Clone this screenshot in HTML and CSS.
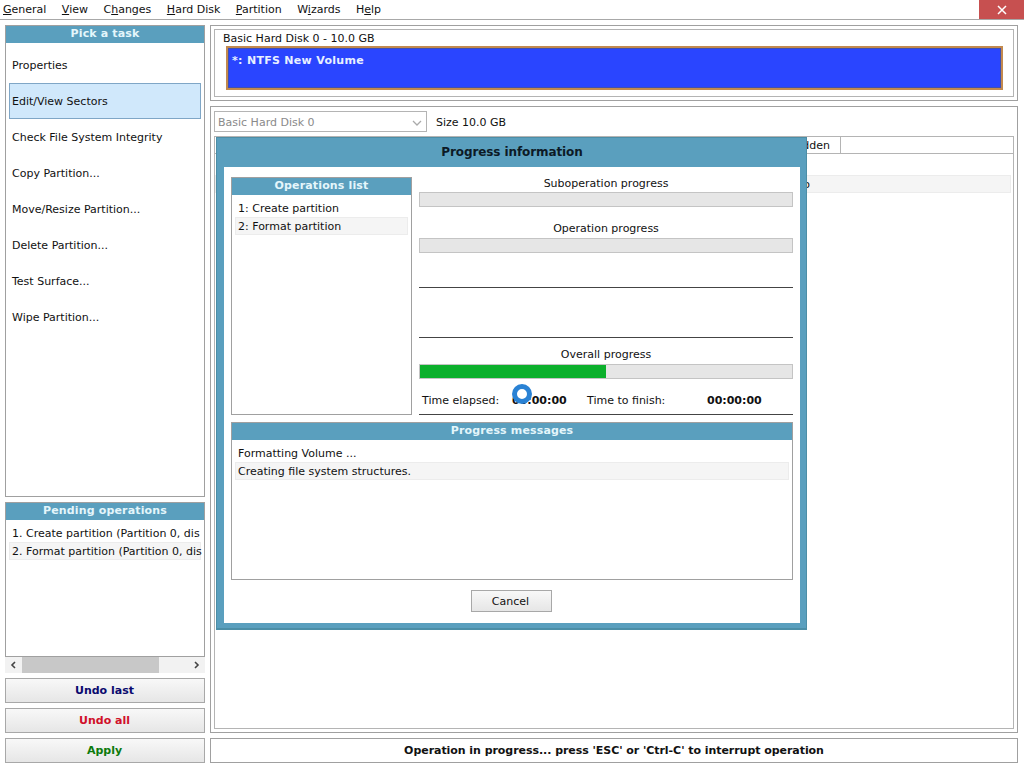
FILE: index.html
```html
<!DOCTYPE html>
<html lang="en">
<head>
<meta charset="utf-8">
<title>Partition manager</title>
<link rel="stylesheet" href="styles.css">
</head>
<body>
<div class="app">
  <header class="menubar">
    <nav class="menus">
      <span class="menu"><u>G</u>eneral</span>
      <span class="menu"><u>V</u>iew</span>
      <span class="menu">C<u>h</u>anges</span>
      <span class="menu"><u>H</u>ard Disk</span>
      <span class="menu"><u>P</u>artition</span>
      <span class="menu">W<u>i</u>zards</span>
      <span class="menu">H<u>e</u>lp</span>
    </nav>
    <div class="close"><svg width="12" height="12" viewBox="0 0 12 12"><path d="M2 2 10 10M10 2 2 10" stroke="#fff" stroke-width="1.5" fill="none"/></svg></div>
  </header>
  <div class="main">
    <aside class="side">
      <section class="panel tasks">
        <h2 class="head">Pick a task</h2>
        <ul class="tasklist">
          <li>Properties</li>
          <li class="sel">Edit/View Sectors</li>
          <li>Check File System Integrity</li>
          <li>Copy Partition...</li>
          <li>Move/Resize Partition...</li>
          <li>Delete Partition...</li>
          <li>Test Surface...</li>
          <li>Wipe Partition...</li>
        </ul>
      </section>
      <section class="panel pending">
        <h2 class="head">Pending operations</h2>
        <ul class="oplist">
          <li>1. Create partition (Partition 0, dis</li>
          <li class="alt">2. Format partition (Partition 0, dis</li>
        </ul>
      </section>
      <div class="hscroll">
        <svg width="16" height="16" viewBox="0 0 16 16"><path d="M10 5 7 8l3 3" stroke="#444" stroke-width="1.6" fill="none"/></svg>
        <div class="track"><div class="thumb"></div></div>
        <svg width="16" height="16" viewBox="0 0 16 16"><path d="M6 5l3 3-3 3" stroke="#444" stroke-width="1.6" fill="none"/></svg>
      </div>
      <button class="action undo">Undo last</button>
      <button class="action undoall">Undo all</button>
      <button class="action apply">Apply</button>
    </aside>
    <div class="content">
      <section class="diskmap">
        <div class="diskmap-in">
          <div class="disklabel">Basic Hard Disk 0 - 10.0 GB</div>
          <div class="volume">*: NTFS New Volume</div>
        </div>
      </section>
      <section class="details">
        <div class="selector">
          <div class="combo"><span>Basic Hard Disk 0</span><svg width="10" height="6" viewBox="0 0 10 6"><path d="M1 1l4 4 4-4" stroke="#aaa" stroke-width="1.3" fill="none"/></svg></div>
          <span class="size">Size 10.0 GB</span>
        </div>
        <div class="table">
          <div class="thead"><div class="hidden-col">Hidden</div></div>
          <div class="trow"><span class="cell-no">No</span></div>
        </div>
      </section>
      <div class="status">Operation in progress... press 'ESC' or 'Ctrl-C' to interrupt operation</div>
    </div>
  </div>

  <div class="dialog">
    <h1 class="dlgtitle">Progress information</h1>
    <div class="dlgbody">
      <div class="dlgtop">
        <section class="panel opslist">
          <h2 class="head">Operations list</h2>
          <ul class="oplist">
            <li>1: Create partition</li>
            <li class="alt">2: Format partition</li>
          </ul>
        </section>
        <div class="progress">
          <div class="plabel">Suboperation progress</div>
          <div class="bar"></div>
          <div class="plabel second">Operation progress</div>
          <div class="bar"></div>
          <div class="rule first"></div>
          <div class="rule"></div>
          <div class="plabel overall">Overall progress</div>
          <div class="bar"><div class="fill" style="width:50%"></div></div>
          <div class="times">
            <span class="tl">Time elapsed:</span><b class="tv">00:00:00</b>
            <span class="tl tl2">Time to finish:</span><b class="tv tv2">00:00:00</b>
          </div>
        </div>
      </div>
      <section class="panel messages">
        <h2 class="head">Progress messages</h2>
        <ul class="oplist">
          <li>Formatting Volume ...</li>
          <li class="alt">Creating file system structures.</li>
        </ul>
      </section>
      <div class="dlgfoot"><button class="cancel">Cancel</button></div>
    </div>
  </div>

  <svg class="cursor" width="24" height="24" viewBox="0 0 24 24"><circle cx="12" cy="12" r="7.5" fill="#fff" stroke="#2a82d4" stroke-width="5"/></svg>
</div>
</body>
</html>
```
FILE: styles.css
```css
* { box-sizing: border-box; }
html, body { margin: 0; padding: 0; }
body { background: #fff; color: #111; font: 11px/18px "DejaVu Sans", Verdana, sans-serif; }
ul { list-style: none; margin: 0; padding: 0; }
h1, h2 { margin: 0; font-size: 11px; font-weight: 700; }
u { text-decoration: underline; text-underline-offset: 1px; }

.app { position: relative; width: 1024px; height: 768px; overflow: hidden; padding-bottom: 5px; display: flex; flex-direction: column; }

.menubar { height: 20px; flex: none; display: flex; justify-content: space-between; border-bottom: 1px solid #a8a8a8; }
.menus { display: flex; gap: 15.5px; padding-left: 3px; line-height: 20px; }
.close { width: 45px; height: 19px; background: #c75050; display: flex; align-items: center; justify-content: center; }

.main { flex: none; height: 738px; padding: 5px 6px 0 5px; display: flex; gap: 5px; }
.side { width: 200px; flex: none; display: flex; flex-direction: column; }
.content { flex: 1; display: flex; flex-direction: column; }

.panel { border: 1px solid #a0a0a0; background: #fff; display: flex; flex-direction: column; }
.head { height: 17px; line-height: 15px; background: #5a9fbe; color: #e4f6fb; text-align: center; flex: none; letter-spacing: .15px; }

.tasks { height: 472px; flex: none; }
.tasklist { padding: 4px 3px; }
.tasklist li { height: 36px; line-height: 38px; padding-left: 3px; }
.tasklist .sel { background: #d0e8fb; border: 1px solid #7fa6c6; line-height: 36px; padding-left: 2px; }

.pending { height: 155px; margin-top: 5px; flex: none; overflow: hidden; }
.oplist { padding: 4px 3px; white-space: nowrap; overflow: hidden; }
.oplist li { height: 18px; line-height: 20px; padding-left: 3px; }
.oplist .alt { background: #f5f5f5; border: 1px solid #ececec; line-height: 18px; padding-left: 2px; }

.hscroll { height: 16px; flex: none; display: flex; background: #f2f2f2; }
.track { flex: 1; }
.thumb { width: 137px; height: 16px; background: #c8c8c8; margin-left: 1px; }

.action { height: 25px; flex: none; margin-top: 5px; border: 1px solid #a8a8a8; background: linear-gradient(#f8f8f8, #e6e6e6); font: 700 11px "DejaVu Sans", Verdana, sans-serif; padding: 0 1px 0 0; }
.undo { color: #0a0a6e; }
.undoall { color: #d0102a; }
.apply { color: #0c7a0c; }

.diskmap { height: 76px; flex: none; border: 1px solid #a0a0a0; padding: 3px; }
.diskmap-in { height: 68px; border: 1px solid #b4b4b4; padding: 0 10px 0 11px; }
.disklabel { height: 16px; line-height: 18px; margin-left: -3px; }
.volume { height: 44px; background: #2a45ff; border: 2px solid #c2894e; box-shadow: inset 0 0 0 1px #4050b0; color: #e8f0ff; font-weight: 700; letter-spacing: .3px; padding: 4px 4px; line-height: 18px; }

.details { height: 627px; flex: none; margin-top: 5px; border: 1px solid #a0a0a0; padding: 4px 3px 3px; display: flex; flex-direction: column; }
.selector { display: flex; align-items: center; gap: 9px; height: 21px; flex: none; line-height: 20px; }
.size { padding-top: 2px; }
.combo { width: 213px; height: 21px; border: 1px solid #b4b4b4; color: #8a8a8a; display: flex; align-items: center; justify-content: space-between; padding: 2px 4px 0 3px; }
.table { flex: 1; margin-top: 4px; border: 1px solid #b4b4b4; }
.thead { height: 17px; border-bottom: 1px solid #b4b4b4; }
.hidden-col { width: 626px; height: 16px; line-height: 18px; border-right: 1px solid #b4b4b4; text-align: right; padding-right: 10px; }
.trow { margin: 21px 2px 0 0; height: 18px; background: #f5f5f5; border: 1px solid #ececec; line-height: 18px; padding-left: 579px; }

.status { height: 25px; flex: none; margin-top: 5px; border: 1px solid #a0a0a0; font-weight: 700; text-align: center; line-height: 23px; letter-spacing: -.05px; }

.dialog { position: absolute; left: 216px; top: 137px; width: 591px; height: 493px; background: #5a9fbe; border: 1px solid #4c8ea6; border-width: 1px 1px 2px 1px; padding: 0 6px 5px 7px; display: flex; flex-direction: column; }
.dlgtitle { height: 29px; line-height: 29px; flex: none; text-align: center; color: #0c1a26; font-size: 12px; letter-spacing: -.1px; }
.dlgbody { flex: 1; background: #fff; padding: 10px 7px 0; display: flex; flex-direction: column; }
.dlgtop { height: 238px; flex: none; display: flex; gap: 7px; }
.opslist { width: 181px; flex: none; }
.progress { flex: 1; display: flex; flex-direction: column; }
.plabel { text-align: center; height: 15px; line-height: 14px; flex: none; }
.plabel.second { margin-top: 16px; line-height: 12px; }
.plabel.overall { margin-top: 10px; height: 16px; line-height: 14px; }
.bar { height: 15px; flex: none; background: #e6e6e6; border: 1px solid #c4c4c4; }
.fill { height: 100%; background: #0bb02c; }
.rule { height: 1px; flex: none; background: #444; margin-top: 49px; }
.rule.first { margin-top: 34px; }
.times { height: 36px; flex: none; display: flex; align-items: center; padding: 8px 0 0 3px; border-bottom: 1px solid #444; }
.tl { width: 90px; flex: none; }
.tl2 { width: 120px; margin-left: 20px; }
.tv { width: 55px; flex: none; }
.messages { height: 158px; flex: none; margin-top: 7px; }
.dlgfoot { flex: 1; display: flex; justify-content: center; padding: 10px 1px 0 0; }
.cancel { width: 81px; height: 22px; border: 1px solid #a8a8a8; background: linear-gradient(#f8f8f8, #e6e6e6); font: 11px "DejaVu Sans", Verdana, sans-serif; color: #111; padding: 0 2px 0 0; }

.cursor { position: absolute; left: 510px; top: 382px; }
```
